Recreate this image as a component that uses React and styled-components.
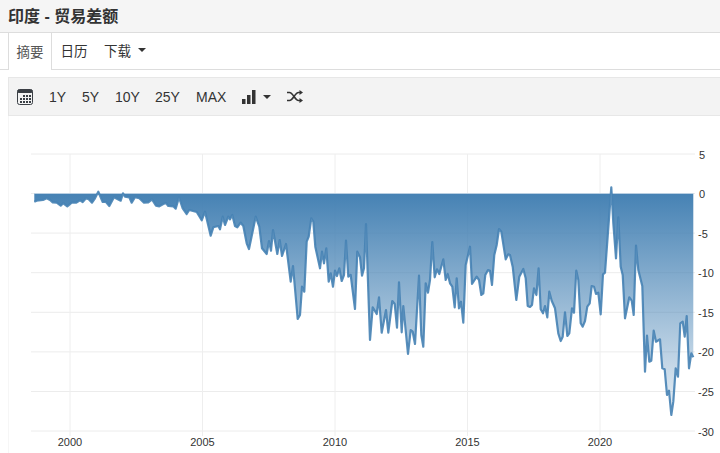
import React from "react";
import styled, { createGlobalStyle } from "styled-components";

const Global = createGlobalStyle`
  html, body { margin: 0; padding: 0; background: #fff; overflow: hidden; }
  body { font-family: "Liberation Sans", "Noto Sans CJK SC", sans-serif; color: #333; }
`;

const Page = styled.div`
  width: 720px;
  height: 453px;
  display: flex;
  flex-direction: column;
  overflow: hidden;
`;

const TitleBar = styled.h1`
  margin: 0;
  height: 33px;
  box-sizing: border-box;
  padding: 0 8px 3px;
  display: flex;
  align-items: center;
  background: #f5f5f5;
  border-bottom: 1px solid #ddd;
  font-size: 16px;
  font-weight: 700;
  color: #333;
`;

const Tabs = styled.nav`
  height: 37px;
  box-sizing: border-box;
  padding-left: 8px;
  display: flex;
  align-items: stretch;
  border-bottom: 1px solid #ddd;
`;

const Tab = styled.div`
  box-sizing: border-box;
  width: ${(p) => p.$w}px;
  height: ${(p) => (p.$active ? "37px" : "36px")};
  padding-bottom: 2px;
  display: flex;
  align-items: center;
  justify-content: center;
  gap: 7px;
  font-size: 13.5px;
  color: ${(p) => (p.$active ? "#555" : "#333")};
  background: #fff;
  border-left: ${(p) => (p.$active ? "1px solid #ddd" : "none")};
  border-right: ${(p) => (p.$active ? "1px solid #ddd" : "none")};
`;

const Caret = styled.span`
  width: 0;
  height: 0;
  display: inline-block;
  border-left: 4px solid transparent;
  border-right: 4px solid transparent;
  border-top: 4px solid #333;
`;

const Toolbar = styled.div`
  margin: 7px 0 0 8px;
  height: 39px;
  box-sizing: border-box;
  padding-left: 8px;
  display: flex;
  align-items: center;
  background: #f3f3f3;
  border: 1px solid #e7e7e7;
  border-right: none;
`;

const ToolIcon = styled.span`
  display: flex;
  align-items: center;
  margin-right: ${(p) => p.$mr || 0}px;
  gap: ${(p) => p.$gap || 0}px;
  color: #333;
`;

const Range = styled.span`
  font-size: 14px;
  color: #333;
  margin-right: ${(p) => p.$mr}px;
`;

const ChartArea = styled.div`
  flex: 1;
  margin-left: 8px;
  border-left: 1px solid #f6f6f6;
  min-height: 0;
`;

const ChartSvg = styled.svg`
  display: block;
  margin-left: -9px;
`;

const AxisText = styled.text`
  font-family: "Liberation Sans", sans-serif;
  font-size: 11px;
  fill: #333;
`;

const pts = [
  [34.3,201.7],[36.7,200.7],[43,200],[46.7,198.3],[50,200],[52.7,202.3],[56.7,202.7],[60.7,205.7],[63.3,203.3],[67.3,206.3],[71.7,202.7],[76,202.7],[80,200.3],[82.7,202],[86,198.3],[88.7,199.3],[92,202.7],[95,198.3],[98.3,191.7],[102.7,202],[106,202],[109.3,206],[114,197.3],[120.7,200.7],[123,193.3],[125,196.7],[129.3,197.3],[131.7,202.7],[135,197.3],[139.3,198.3],[144,202.7],[148.3,202.3],[152,199.3],[156,205.7],[159.3,206.3],[163.3,204],[166,203],[168.3,206],[173.3,206.3],[175.7,208.7],[179,197.3],[182.7,208.3],[186.7,214],[189.3,210],[196.7,212],[201.7,220.3],[205,211.7],[210.7,235.7],[213.3,227.3],[218.3,226],[220,229.3],[222.7,216.7],[225,225],[228.3,216.7],[230,219.3],[232.3,215],[235,226],[237.3,227.3],[240.7,222.7],[243.3,226],[246.7,243.3],[249,249],[255.7,216.7],[259.3,226.7],[262,248.3],[266.7,254],[269,241],[271,250.7],[273,230],[277.3,254],[279.7,240],[282,256],[286,244],[290.7,281.7],[293,266],[297.7,319],[300,315],[302,286.7],[304.3,291.7],[306.7,241.7],[308.7,236.7],[311.3,218.3],[313.3,221.7],[315.3,246.7],[320,268.3],[322,251.7],[324,263.3],[326.3,248.3],[328.7,281.7],[330.7,273.3],[333,286.7],[335,270.7],[337,276],[339.3,268.3],[341.7,281],[344,275],[346,240.7],[348.3,276.7],[350.7,275],[355,309],[357.3,251.7],[360,257.3],[362,275.7],[364,268.3],[366,224],[370,340],[372.7,307.3],[376.7,314],[379,297.3],[381.7,332.7],[386,310],[388.3,332.7],[392.3,301],[394.7,304],[397,327.7],[399,282.3],[401.7,332.3],[403.3,306],[408,354],[410.7,330],[412.7,331.7],[415,344],[419,275.7],[421.3,335],[423.3,346.7],[425.7,283.3],[428,292.7],[430,280],[432.3,242],[434.7,277.3],[437,269.3],[439.3,274],[443.3,259.3],[445.7,280],[447.7,274],[450,283.3],[452.3,286.7],[454.7,307.3],[456.7,278.3],[459,308.3],[461,301.7],[463.3,322.7],[465.7,265],[470,246.7],[472,284],[476.7,276.7],[479,280],[481.3,295],[483.3,293.3],[485.3,275],[488,270],[490,270.7],[492,285],[494.3,255],[496.7,245],[499,229],[501.3,231.7],[505.7,259.3],[508.3,254.3],[510,255],[512.7,266.7],[516.3,300],[519.3,276.7],[523.3,269],[525.7,278.3],[527.7,306],[530,307],[532,305],[534,288.3],[536.4,295],[538.6,268.3],[540.7,309.3],[543,313.3],[545,306],[547.3,317.3],[549.3,291.7],[551.7,300.7],[555,308.3],[558.3,333.3],[560.7,341],[562.7,336.7],[565,312.3],[567.3,336],[569.3,333.3],[572,308.3],[574,312.7],[576.3,270.7],[578.3,280],[580.7,323.3],[582.7,326.7],[585,321],[587.3,306.7],[589.7,303.3],[591.7,286],[594,286.7],[596,294],[598.3,292.7],[600.7,314.3],[603,274.3],[605,272.7],[611.3,187.3],[613.3,223],[616,258.3],[618.3,217.3],[620.7,266.7],[622.7,275],[625,318.3],[629.3,297.3],[631.7,300.7],[633.7,315],[636,245.7],[638.3,270],[642.3,286],[645,371.7],[647,335.7],[649.3,361.7],[651.3,360.7],[653.7,330.7],[656,341.7],[660,339.3],[662.3,368.3],[664.7,369.3],[667,395],[669,390.7],[671.3,415],[673.3,401.7],[675.7,368.3],[678,376.7],[680.3,323.3],[682.7,321.7],[684.7,336.7],[686.7,316],[689,368.3],[691.3,353.3],[693.3,357.3],
];
const linePath = "M" + pts.map((p) => p.join(",")).join("L");
const ZERO = 193.5;
const areaPath = `M34.3,${ZERO}` + "L" + pts.map((p) => p.join(",")).join("L") + `L693.3,${ZERO}Z`;

const yTicks = [
  [5, 154], [0, 193.5], [-5, 233.1], [-10, 272.7], [-15, 312.3], [-20, 351.9], [-25, 391.5], [-30, 431],
];
const xTicks = [[2000, 70], [2005, 202.5], [2010, 335], [2015, 467.5], [2020, 600]];

function CalendarIcon() {
  return (
    <svg width="16" height="16" viewBox="0 0 16 16">
      <rect x="0.5" y="0.5" width="15" height="15" rx="2" fill="#f3f3f3" stroke="#3a3f45" />
      <rect x="0.5" y="0.5" width="15" height="3.5" rx="1.5" fill="#3a3f45" />
      {[6, 9, 12].flatMap((y, r) =>
        [3, 6, 9, 12].filter((x) => !(r === 0 && x === 3)).map((x) => (
          <rect key={`${x}-${y}`} x={x} y={y} width="2" height="2" fill="#3a3f45" />
        ))
      )}
    </svg>
  );
}

function BarsIcon() {
  return (
    <svg width="14" height="14" viewBox="0 0 14 14">
      <rect x="0" y="9" width="3.5" height="5" fill="#333" />
      <rect x="5" y="5" width="3.5" height="9" fill="#333" />
      <rect x="10" y="0" width="3.5" height="14" fill="#333" />
    </svg>
  );
}

function ShuffleIcon() {
  return (
    <svg width="16" height="13" viewBox="0 0 16 13">
      <path
        d="M0,2.5H2.5C6,2.5 8,10.5 11.5,10.5H13M0,10.5H2.5C6,10.5 8,2.5 11.5,2.5H13"
        fill="none"
        stroke="#333"
        strokeWidth="1.6"
      />
      <path d="M12.5,0L16,2.5L12.5,5Z M12.5,8L16,10.5L12.5,13Z" fill="#333" />
    </svg>
  );
}

export default function App() {
  return (
    <Page>
      <Global />
      <TitleBar>印度 - 贸易差额</TitleBar>
      <Tabs>
        <Tab $active $w={44}>摘要</Tab>
        <Tab $w={44}>日历</Tab>
        <Tab $w={58}>下载<Caret /></Tab>
      </Tabs>
      <Toolbar>
        <ToolIcon $mr={16}><CalendarIcon /></ToolIcon>
        <Range $mr={15.9}>1Y</Range>
        <Range $mr={15.9}>5Y</Range>
        <Range $mr={15.1}>10Y</Range>
        <Range $mr={16.1}>25Y</Range>
        <Range $mr={15.7}>MAX</Range>
        <ToolIcon $mr={16} $gap={7}><BarsIcon /><Caret /></ToolIcon>
        <ToolIcon><ShuffleIcon /></ToolIcon>
      </Toolbar>
      <ChartArea>
        <ChartSvg width="720" height="337" viewBox="0 116 720 337">
          <defs>
            <linearGradient id="areaFill" gradientUnits="userSpaceOnUse" x1="0" y1="193.5" x2="0" y2="431">
              <stop offset="0" stopColor="#4682b4" stopOpacity="1" />
              <stop offset="1" stopColor="#4682b4" stopOpacity="0.05" />
            </linearGradient>
          </defs>
          {yTicks.map(([v, y]) => (
            <line key={v} x1="31" x2="695" y1={y} y2={y} stroke="#ececec" strokeWidth="1" />
          ))}
          {xTicks.map(([v, x]) => (
            <line key={v} x1={x} x2={x} y1="154" y2="436" stroke="#eeeeee" strokeWidth="1" />
          ))}
          <path d={areaPath} fill="url(#areaFill)" />
          <line x1="34" x2="693" y1={ZERO} y2={ZERO} stroke="#b9cfe2" strokeWidth="1" />
          <path d={linePath} fill="none" stroke="#4682b4" strokeWidth="2.2" strokeLinejoin="round" opacity="0.9" />
          {yTicks.map(([v, y]) => (
            <AxisText key={v} x={v > 0 || v === 0 ? 699 : 698} y={y + 4.5}>{v}</AxisText>
          ))}
          {xTicks.map(([v, x]) => (
            <AxisText key={v} x={x} y="445.5" textAnchor="middle">{v}</AxisText>
          ))}
        </ChartSvg>
      </ChartArea>
    </Page>
  );
}
